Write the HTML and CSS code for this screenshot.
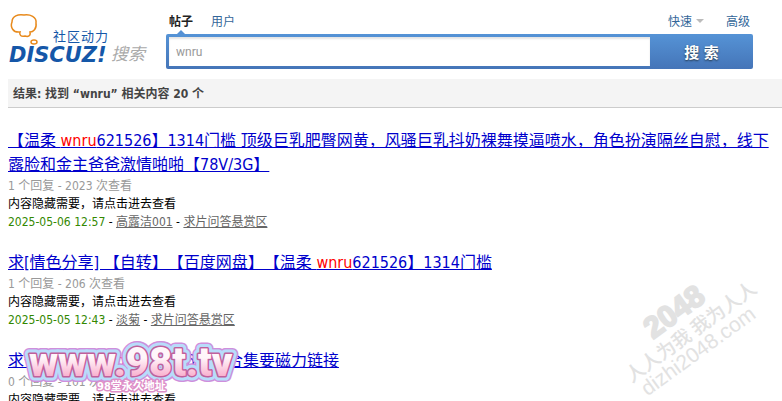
FILE: index.html
```html
<!DOCTYPE html>
<html lang="zh-CN">
<head>
  <meta charset="utf-8">
  <title>搜索</title>
  <link rel="stylesheet" href="styles.css">
</head>
<body>
  <header class="top">
    <a class="logo" href="#">
      <svg width="140" height="58" viewBox="0 0 140 58" role="img" aria-label="Discuz! 搜索">
        <path class="bubble" d="M12 24C5 25 2 19 4 14C4 8 10 6 16 7C22 6 29 9 28 15C29 21 25 24 22 24C23 28 20 29 17 28C13 29 11 27 12 24Z"/>
        <ellipse class="bubble" cx="26" cy="34" rx="3" ry="2"/>
        <text class="slogan" x="45" y="33">社区动力</text>
        <text class="brand" x="1" y="54">DISCUZ!</text>
        <text class="product" x="103" y="52">搜索</text>
      </svg>
    </a>
    <form class="search">
      <nav class="tabs">
        <a class="current" href="#">帖子</a>
        <a href="#">用户</a>
        <a class="quick" href="#">快速</a>
        <a href="#">高级</a>
      </nav>
      <div class="box">
        <input type="text" name="srchtxt" value="wnru" aria-label="搜索">
        <button type="submit">搜 索</button>
      </div>
    </form>
  </header>

  <h2 class="summary">结果: 找到 “wnru” 相关内容 20 个</h2>

  <ul class="results">
    <li>
      <h3><a href="#">【温柔 <em>wnru</em>621526】1314门槛 顶级巨乳肥臀网黄，风骚巨乳抖奶裸舞摸逼喷水，角色扮演隔丝自慰，线下露脸和金主爸爸激情啪啪【78V/3G】</a></h3>
      <p class="count">1 个回复 - 2023 次查看</p>
      <p>内容隐藏需要，请点击进去查看</p>
      <p><span class="date">2025-05-06 12:57</span> - <a href="#">高露洁001</a> - <a href="#">求片问答悬赏区</a></p>
    </li>
    <li>
      <h3><a href="#">求[情色分享] 【自转】【百度网盘】【温柔 <em>wnru</em>621526】1314门槛</a></h3>
      <p class="count">1 个回复 - 206 次查看</p>
      <p>内容隐藏需要，请点击进去查看</p>
      <p><span class="date">2025-05-05 12:43</span> - <a href="#">淡菊</a> - <a href="#">求片问答悬赏区</a></p>
    </li>
    <li>
      <h3><a href="#">求一下【温柔<em>wnru</em>621526】的合集要磁力链接</a></h3>
      <p class="count">0 个回复 - 101 次查看</p>
      <p>内容隐藏需要，请点击进去查看</p>
    </li>
  </ul>

  <svg class="mark-left" width="224" height="66" viewBox="0 0 224 66">
    <defs>
      <linearGradient id="pink" x1="0" y1="0" x2="0" y2="1">
        <stop offset="0.4" stop-color="#fff6fa"/>
        <stop offset="0.85" stop-color="#f8a6c8"/>
      </linearGradient>
      <text id="site" x="9" y="43">www.98t.tv</text>
      <text id="sub" x="77" y="57">98堂永久地址</text>
    </defs>
    <use href="#site" class="site rim"/>
    <use href="#site" class="site halo"/>
    <use href="#site" class="site edge"/>
    <use href="#site" class="site face"/>
    <use href="#sub" class="sub sub-rim"/>
    <use href="#sub" class="sub sub-face"/>
  </svg>

  <svg class="mark-right" width="160" height="129" viewBox="0 0 160 129">
    <g transform="rotate(-36 80 65)">
      <text class="big" x="47" y="44">2048</text>
      <text class="motto" x="4" y="67">人人为我 我为人人</text>
      <text class="domain" x="9" y="87">dizhi2048.com</text>
    </g>
  </svg>
</body>
</html>
```
FILE: styles.css
```css
body {
  margin: 0;
  padding: 8px 0 0 8px;
  height: 100vh;
  box-sizing: border-box;
  background: #fff;
  color: #000;
  font: 12px/18px "DejaVu Sans Condensed", "Noto Sans CJK SC", sans-serif;
  text-spacing-trim: space-all;
  position: relative;
  overflow: hidden;
}

h2, h3, p, ul {
  margin: 0;
  padding: 0;
}

.top {
  display: flex;
  gap: 18px;
  height: 71px;
}

.logo {
  width: 140px;
}

.bubble {
  fill: #fff;
  stroke: #e88a1c;
  stroke-width: 1.5;
}

.slogan {
  font-size: 13px;
  letter-spacing: 1px;
  fill: #1557a8;
}

.brand {
  font: italic bold 21px "DejaVu Sans", sans-serif;
  fill: #1557a8;
}

.product {
  font-size: 17px;
  font-style: italic;
  fill: #aaa;
}

.search {
  flex: 1;
  max-width: 587px;
}

.tabs {
  display: flex;
  gap: 18px;
  height: 26px;
  line-height: 28px;
  padding: 0 3px;
}

.tabs a {
  color: #369;
  text-decoration: none;
}

.tabs .current {
  color: #222;
  font-weight: bold;
  position: relative;
}

.tabs .current::after {
  content: "";
  position: absolute;
  left: 8px;
  bottom: 0;
  border: 4px solid transparent;
  border-top: 0;
  border-bottom-color: #5590d4;
}

.tabs .quick {
  margin-left: auto;
}

.tabs .quick::after {
  content: "";
  display: inline-block;
  margin: 0 4px 3px;
  border: 4px solid transparent;
  border-top-color: #bbb;
  border-bottom: 0;
}

.box {
  display: flex;
  height: 35px;
  box-sizing: border-box;
  padding: 3px 0 3px 3px;
  border-radius: 2px;
  background: linear-gradient(#5593d6, #4575b8);
}

.box input {
  flex: 1;
  min-width: 0;
  border: 0;
  padding: 0 7px;
  color: #999;
  background: #fff;
  font: 12px Roboto, sans-serif;
  box-shadow: inset 0 2px 2px #e4e4e4;
}

.box button {
  width: 103px;
  border: 0;
  padding: 0;
  color: #fff;
  background: none;
  font: bold 15px "DejaVu Sans Condensed", "Noto Sans CJK SC", sans-serif;
  text-shadow: 0 1px 2px #234;
}

.summary {
  padding: 6px 5px 4px;
  border-bottom: 1px solid #ccc;
  background: #f4f4f4;
  color: #444;
  font-size: 12px;
}

.results {
  list-style: none;
  padding: 21px 8px 0 0;
}

.results li {
  margin-bottom: 20px;
}

.results h3 {
  font-size: 16px;
  font-weight: normal;
  line-height: 24px;
}

.results h3 a {
  color: #00c;
}

.results em {
  color: #f00;
  font-style: normal;
}

.results p a {
  color: #666;
}

.results .count {
  color: #999;
}

.date {
  color: #380;
}

.mark-left {
  position: absolute;
  left: 20px;
  top: 333px;
}

.site {
  font: 900 40px Roboto, sans-serif;
  stroke-linejoin: round;
}

.rim {
  fill: #cf8fdc;
  stroke: #cf8fdc;
  stroke-width: 12;
}

.halo {
  fill: #b8dcfa;
  stroke: #b8dcfa;
  stroke-width: 9;
}

.edge {
  fill: #c0609c;
  stroke: #c0609c;
  stroke-width: 3;
}

.face {
  fill: url(#pink);
}

.sub {
  font: bold 11px "DejaVu Sans Condensed", "Noto Sans CJK SC", sans-serif;
  stroke-linejoin: round;
}

.sub-rim {
  fill: #de8fc8;
  stroke: #de8fc8;
  stroke-width: 3;
}

.sub-face {
  fill: #fff;
}

.mark-right {
  position: absolute;
  left: 612px;
  top: 272px;
  fill: #e2e2e2;
}

.big {
  font: bold 30px "Liberation Sans", sans-serif;
  stroke: #e2e2e2;
  stroke-width: 2;
}

.motto {
  font: 500 19px "Noto Sans CJK SC", sans-serif;
}

.domain {
  font: 21px "Liberation Sans", sans-serif;
}
```
